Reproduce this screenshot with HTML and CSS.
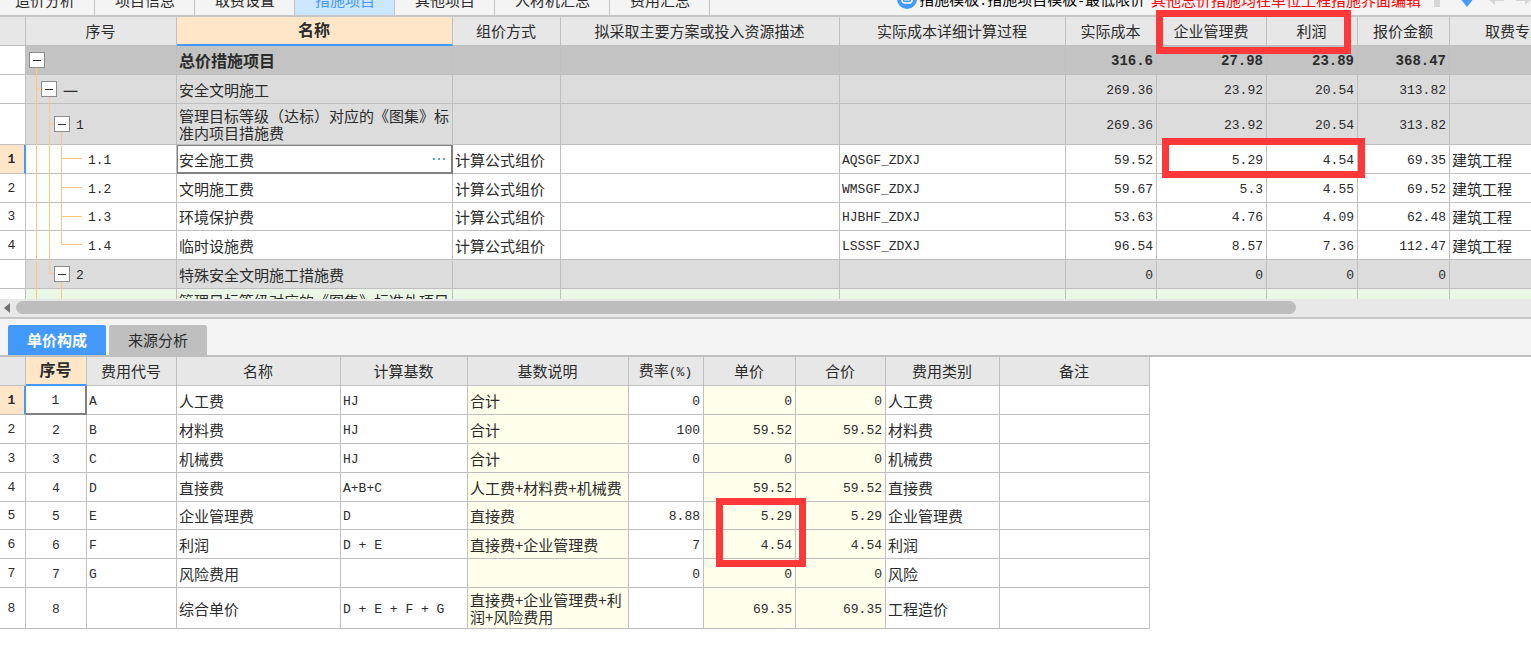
FILE: index.html
```html
<!DOCTYPE html>
<html lang="zh-CN">
<head>
<meta charset="utf-8">
<title>措施项目</title>
<link rel="stylesheet" href="styles.css">
</head>
<body>
<header class="topbar">
  <nav class="tabs">
    <button class="tab tab-first">造价分析</button>
    <button class="tab">项目信息</button>
    <button class="tab">取费设置</button>
    <button class="tab tab-active">措施项目</button>
    <button class="tab">其他项目</button>
    <button class="tab">人材机汇总</button>
    <button class="tab">费用汇总</button>
  </nav>
  <div class="tools">
    <svg class="tool-logo" width="20" height="20" viewBox="0 0 20 20"><circle cx="10" cy="10" r="10" fill="#4499ff"/><rect x="5" y="4" width="10" height="10" rx="3" fill="none" stroke="#fff" stroke-width="1.5"/><path d="M8 9v2h4V9" fill="none" stroke="#fff" stroke-width="1.2"/></svg>
    <span class="template">措施模板<span class="mono">:</span>措施项目模板<span class="mono">-</span>最低限价</span>
    <span class="notice">其他总价措施均在单位工程措施界面编辑</span>
    <svg class="tool-arrows" width="110" height="18" viewBox="0 0 110 18"><path d="M8 0l8 8h-5v9H5V8H0z" fill="#d6d6d6"/><path d="M35 0h6v7h5l-8 10-8-10h5z" fill="#4499ff"/><path d="M59 9l7-6v4h9v4h-9v4zM103 9l-7-6v4h-9v4h9v4z" fill="#d6d6d6"/></svg>
  </div>
</header>

<main>
  <section class="viewport">
    <table class="grid measures">
      <colgroup><col class="w26"><col class="w151"><col class="w276"><col class="w108"><col class="w279"><col class="w226"><col class="w91"><col class="w110"><col class="w91"><col class="w92"><col class="w132"></colgroup>
      <thead>
        <tr><th></th><th>序号</th><th class="current">名称</th><th>组价方式</th><th>拟采取主要方案或投入资源描述</th><th>实际成本详细计算过程</th><th>实际成本</th><th>企业管理费</th><th>利润</th><th>报价金额</th><th>取费专业</th></tr>
      </thead>
      <tbody>
        <tr class="root"><td class="gutter"></td><td><div class="tree"><svg class="guide" width="3" height="20"><path d="M10.5 10V25"/></svg><button class="toggle" aria-label="折叠"></button></div></td><td>总价措施项目</td><td></td><td></td><td></td><td class="num">316.6</td><td class="num">27.98</td><td class="num">23.89</td><td class="num">368.47</td><td></td></tr>
        <tr class="group"><td class="gutter"></td><td><div class="tree"><svg class="guide" width="15" height="20"><path d="M10.5-5V25M10.5 10H15M23.5 10V25"/></svg><button class="toggle" aria-label="折叠"></button><span>一</span></div></td><td>安全文明施工</td><td></td><td></td><td></td><td class="num">269.36</td><td class="num">23.92</td><td class="num">20.54</td><td class="num">313.82</td><td></td></tr>
        <tr class="group tall"><td class="gutter"></td><td><div class="tree"><svg class="guide" width="28" height="20"><path d="M10.5-11V31M23.5-11V31M23.5 10H28M35.5 10V31"/></svg><button class="toggle" aria-label="折叠"></button><span class="mono">1</span></div></td><td>管理目标等级（达标）对应的《图集》标准内项目措施费</td><td></td><td></td><td></td><td class="num">269.36</td><td class="num">23.92</td><td class="num">20.54</td><td class="num">313.82</td><td></td></tr>
        <tr><td class="gutter selected">1</td><td><div class="tree"><svg class="guide" width="56" height="20"><path d="M10.5-5V25M23.5-5V25M35.5-5V25M35.5 9.5H56"/></svg><span class="mono">1.1</span></div></td><td class="focus"><div class="edit"><span>安全施工费</span><button class="more" aria-label="更多"><svg width="14" height="4"><path d="M1 1h2v2H1zM6 1h2v2H6zM11 1h2v2h-2z" fill="#5ba3d9"/></svg></button></div></td><td>计算公式组价</td><td></td><td class="code">AQSGF_ZDXJ</td><td class="num">59.52</td><td class="num">5.29</td><td class="num">4.54</td><td class="num">69.35</td><td>建筑工程</td></tr>
        <tr><td class="gutter">2</td><td><div class="tree"><svg class="guide" width="56" height="20"><path d="M10.5-5V25M23.5-5V25M35.5-5V25M35.5 9.5H56"/></svg><span class="mono">1.2</span></div></td><td>文明施工费</td><td>计算公式组价</td><td></td><td class="code">WMSGF_ZDXJ</td><td class="num">59.67</td><td class="num">5.3</td><td class="num">4.55</td><td class="num">69.52</td><td>建筑工程</td></tr>
        <tr class="short"><td class="gutter">3</td><td><div class="tree"><svg class="guide" width="56" height="20"><path d="M10.5-5V25M23.5-5V25M35.5-5V25M35.5 9.5H56"/></svg><span class="mono">1.3</span></div></td><td>环境保护费</td><td>计算公式组价</td><td></td><td class="code">HJBHF_ZDXJ</td><td class="num">53.63</td><td class="num">4.76</td><td class="num">4.09</td><td class="num">62.48</td><td>建筑工程</td></tr>
        <tr><td class="gutter">4</td><td><div class="tree"><svg class="guide" width="56" height="20"><path d="M10.5-5V25M23.5-5V25M35.5-5V9.5H56"/></svg><span class="mono">1.4</span></div></td><td>临时设施费</td><td>计算公式组价</td><td></td><td class="code">LSSSF_ZDXJ</td><td class="num">96.54</td><td class="num">8.57</td><td class="num">7.36</td><td class="num">112.47</td><td>建筑工程</td></tr>
        <tr class="group"><td class="gutter"></td><td><div class="tree"><svg class="guide" width="28" height="20"><path d="M10.5-5V25M23.5-5V9.5H28M35.5 10V25"/></svg><button class="toggle" aria-label="折叠"></button><span class="mono">2</span></div></td><td>特殊安全文明施工措施费</td><td></td><td></td><td></td><td class="num">0</td><td class="num">0</td><td class="num">0</td><td class="num">0</td><td></td></tr>
        <tr class="tall leaf"><td class="gutter"></td><td><div class="tree"><svg class="guide" width="56" height="20"><path d="M10.5-11V31M35.5-11V10H56"/></svg></div></td><td>管理目标等级对应的《图集》标准外项目措施费</td><td></td><td></td><td></td><td></td><td></td><td></td><td></td><td></td></tr>
      </tbody>
    </table>
  </section>
  <div class="scrollbar"><svg width="16" height="14" viewBox="0 0 16 14"><path d="M10 2v10L4 7z" fill="#707070"/></svg><div class="thumb"></div></div>

  <nav class="subtabs">
    <button class="subtab subtab-active">单价构成</button>
    <button class="subtab">来源分析</button>
  </nav>
  <table class="grid prices">
    <colgroup><col class="w26"><col class="w61"><col class="w90"><col class="w164"><col class="w127"><col class="w161"><col class="w75"><col class="w92"><col class="w90"><col class="w114"><col class="w150"></colgroup>
    <thead>
      <tr><th></th><th class="current">序号</th><th>费用代号</th><th>名称</th><th>计算基数</th><th>基数说明</th><th>费率<span class="mono">(%)</span></th><th>单价</th><th>合价</th><th>费用类别</th><th>备注</th></tr>
    </thead>
    <tbody>
      <tr><td class="gutter selected">1</td><td class="index focus-first">1</td><td class="code">A</td><td>人工费</td><td class="code">HJ</td><td class="calc">合计</td><td class="num">0</td><td class="num calc">0</td><td class="num calc">0</td><td>人工费</td><td></td></tr>
      <tr><td class="gutter">2</td><td class="index">2</td><td class="code">B</td><td>材料费</td><td class="code">HJ</td><td class="calc">合计</td><td class="num">100</td><td class="num calc">59.52</td><td class="num calc">59.52</td><td>材料费</td><td></td></tr>
      <tr><td class="gutter">3</td><td class="index">3</td><td class="code">C</td><td>机械费</td><td class="code">HJ</td><td class="calc">合计</td><td class="num">0</td><td class="num calc">0</td><td class="num calc">0</td><td>机械费</td><td></td></tr>
      <tr><td class="gutter">4</td><td class="index">4</td><td class="code">D</td><td>直接费</td><td class="code">A+B+C</td><td class="calc">人工费+材料费+机械费</td><td></td><td class="num calc">59.52</td><td class="num calc">59.52</td><td>直接费</td><td></td></tr>
      <tr class="short"><td class="gutter">5</td><td class="index">5</td><td class="code">E</td><td>企业管理费</td><td class="code">D</td><td class="calc">直接费</td><td class="num">8.88</td><td class="num calc">5.29</td><td class="num calc">5.29</td><td>企业管理费</td><td></td></tr>
      <tr><td class="gutter">6</td><td class="index">6</td><td class="code">F</td><td>利润</td><td class="code">D + E</td><td class="calc">直接费+企业管理费</td><td class="num">7</td><td class="num calc">4.54</td><td class="num calc">4.54</td><td>利润</td><td></td></tr>
      <tr><td class="gutter">7</td><td class="index">7</td><td class="code">G</td><td>风险费用</td><td></td><td class="calc"></td><td class="num">0</td><td class="num calc">0</td><td class="num calc">0</td><td>风险</td><td></td></tr>
      <tr class="tall"><td class="gutter">8</td><td class="index">8</td><td></td><td>综合单价</td><td class="code">D + E + F + G</td><td class="calc">直接费+企业管理费+利润+风险费用</td><td></td><td class="num calc">69.35</td><td class="num calc">69.35</td><td>工程造价</td><td></td></tr>
    </tbody>
  </table>
</main>

<div class="mark mark-header"></div>
<div class="mark mark-row"></div>
<div class="mark mark-price"></div>
</body>
</html>
```

FILE: styles.css
```css
* { box-sizing: border-box; }

body {
  position: relative;
  margin: 0;
  overflow-x: hidden;
  background: #fff;
  color: #2b2b2b;
  font: 15px/17px "Noto Sans CJK SC", sans-serif;
}

button {
  margin: 0;
  padding: 0;
  border: 0;
  font: inherit;
  color: inherit;
}

.mono,
.num,
.code,
.index,
.gutter {
  font-family: "Liberation Mono", monospace;
  font-size: 13px;
}

.mono { line-height: 1; }

/* upper tab strip */
.topbar {
  display: flex;
  align-items: flex-end;
  justify-content: space-between;
  height: 17px;
  overflow: hidden;
  background: #f4f4f4;
  border-bottom: 2px solid #c6c6c6;
}

.tabs {
  display: flex;
}

.tab {
  height: 30px;
  padding: 0 19px 2px 20px;
  background: #f4f4f4;
  border-right: 1px solid #c4c4c4;
  white-space: nowrap;
}

.tab-first { padding-left: 15px; }

.tab-active {
  background: #cbe6ff;
  color: #4499ff;
}

.tools {
  display: flex;
  align-items: center;
  height: 30px;
  padding-bottom: 2px;
  white-space: nowrap;
}

.tool-logo { margin-right: 2px; }
.template { color: #000; margin-right: 6px; }
.notice { color: #f00; margin-right: 8px; }
.tool-arrows { margin-right: -8px; }

/* data grids */
.grid {
  table-layout: fixed;
  width: 0;
  border-collapse: separate;
  border-spacing: 0;
}

.w26 { width: 26px; }
.w61 { width: 61px; }
.w75 { width: 75px; }
.w90 { width: 90px; }
.w91 { width: 91px; }
.w92 { width: 92px; }
.w108 { width: 108px; }
.w110 { width: 110px; }
.w114 { width: 114px; }
.w127 { width: 127px; }
.w132 { width: 132px; }
.w150 { width: 150px; }
.w151 { width: 151px; }
.w161 { width: 161px; }
.w164 { width: 164px; }
.w226 { width: 226px; }
.w276 { width: 276px; }
.w279 { width: 279px; }

.grid th,
.grid td {
  height: 29px;
  padding: 0 2px;
  border-right: 1px solid #bfbfbf;
  border-bottom: 1px solid #bfbfbf;
  text-align: left;
  vertical-align: middle;
}

.grid th {
  padding: 0 1px 2px 0;
  background: #e7e7e7;
  font-weight: 400;
  text-align: center;
  white-space: nowrap;
}

.grid th.current {
  background: #ffe6c9;
  border-bottom: 2px solid #4499ff;
  font-size: 16px;
  font-weight: 700;
}

.grid .short td { height: 28px; }
.grid .tall td { height: 41px; }
.grid td.num { padding: 2px 3px 0 2px; text-align: right; }
.grid td.code { padding-top: 2px; }
.grid td.index { padding-top: 2px; text-align: center; }
.grid td.calc { background: #ffffeb; }

.root td { background: #c3c3c3; font-size: 16px; font-weight: 700; }
.root td.num { font-size: 14px; }
.group td { background: #dcdcdc; }
.leaf td { background: #ebf7e6; }

.grid td.gutter {
  padding: 0 2px 0 0;
  background: #fff;
  text-align: center;
}

.grid td.selected {
  padding-right: 1px;
  background: #ffe6c9;
  border-right: 2px solid #4499ff;
  font-weight: 700;
}

.grid td.focus { box-shadow: inset 0 0 0 1px #808080; border-color: #808080; }

.grid td.focus-first {
  border-right: 2px solid #808080;
  border-bottom: 2px solid #808080;
}

.edit {
  display: flex;
  align-items: center;
  justify-content: space-between;
}

.more {
  display: flex;
  padding: 4px;
  background: none;
}

/* tree column */
.measures td:nth-child(2) { padding: 0; }

.tree {
  display: flex;
  align-items: center;
}

.guide {
  flex: none;
  overflow: visible;
  fill: none;
  stroke: #ffc680;
}

.tree span {
  margin-left: 6px;
  padding-top: 2px;
}

.toggle {
  position: relative;
  width: 16px;
  height: 16px;
  padding: 0 3px;
  background: #fff;
  border: 1px solid #8c8c8c;
}

.toggle::before {
  content: "";
  display: block;
  height: 1px;
  background: #333;
}

.viewport {
  height: 282px;
  overflow: hidden;
}

.scrollbar {
  display: flex;
  align-items: center;
  height: 20px;
  padding-bottom: 1px;
  background: #e8e8e8;
  border-bottom: 2px solid #c6c6c6;
}

.thumb {
  width: 1280px;
  height: 13px;
  border-radius: 7px;
  background: #bdbdbd;
}

/* lower tab strip */
.subtabs {
  display: flex;
  gap: 3px;
  padding: 6px 8px 0;
  background: #f4f4f4;
  border-bottom: 2px solid #bfbfbf;
}

.subtab {
  width: 98px;
  height: 30px;
  padding-bottom: 2px;
  border-radius: 2px 2px 0 0;
  background: #bfbfbf;
}

.subtab-active {
  background: #4499ff;
  color: #fff;
  font-weight: 700;
}

/* highlight frames drawn over the grids */
.mark {
  position: absolute;
  border: 7px solid #fc3838;
  pointer-events: none;
}

.mark-header { left: 1156px; top: 10px; width: 195px; height: 44px; }
.mark-row { left: 1162px; top: 138px; width: 203px; height: 40px; }
.mark-price { left: 716px; top: 498px; width: 90px; height: 69px; }
```
